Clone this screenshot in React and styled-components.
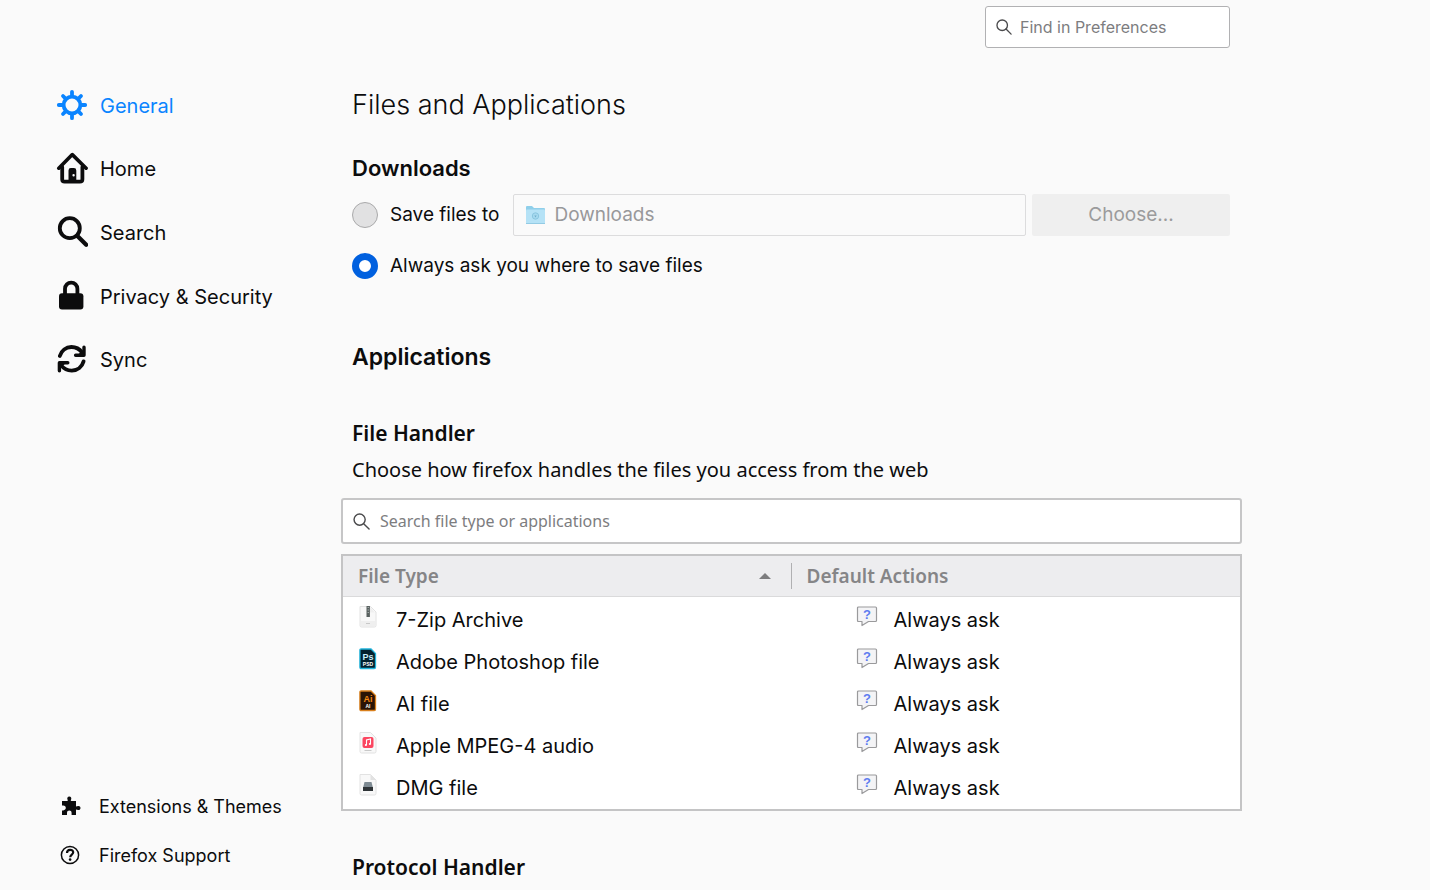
import React from "react";
import styled, { createGlobalStyle } from "styled-components";

const humanist = `"Noto Sans", "Open Sans", sans-serif`;

const GlobalStyle = createGlobalStyle`
  *, *::before, *::after { box-sizing: border-box; }
  body {
    margin: 0;
    background: #fafafa;
    color: #0c0c0d;
    font-family: Inter, "Liberation Sans", sans-serif;
    font-size: 20px;
    line-height: 24px;
  }
  h1, h2, h3, p, ul { margin: 0; padding: 0; }
  input, button { font: inherit; color: inherit; }
`;

const Page = styled.div`
  display: flex;
  min-height: 100vh;
`;

const Sidebar = styled.aside`
  display: flex;
  flex-direction: column;
  justify-content: space-between;
  flex: 0 0 341px;
  padding: 74px 12px 10px 56px;
`;

const NavList = styled.ul`
  display: flex;
  flex-direction: column;
  height: ${(p) => (p.$small ? "98px" : "318px")};
  list-style: none;
`;

const NavEntry = styled.li`
  flex: 1;
`;

const NavLink = styled.a`
  display: flex;
  align-items: center;
  gap: ${(p) => (p.$small ? "16px" : "12px")};
  height: 100%;
  padding-left: ${(p) => (p.$small ? "3px" : "0")};
  font-size: ${(p) => (p.$small ? "18px" : "20px")};
  color: ${(p) => (p.$active ? "#0a84ff" : "#0c0c0d")};
  text-decoration: none;
  svg { flex: none; margin-bottom: 2px; }
`;

const Main = styled.main`
  flex: 1;
  min-width: 0;
  max-width: 901px;
  padding-top: 6px;
`;

const TopBar = styled.div`
  display: flex;
  justify-content: flex-end;
  padding: 0 12px;
`;

const SearchField = styled.label`
  display: flex;
  align-items: center;
  gap: ${(p) => (p.$large ? "10px" : "8px")};
  width: ${(p) => p.$width || "auto"};
  height: ${(p) => (p.$large ? "46px" : "42px")};
  padding: 0 10px;
  background: #fff;
  border: ${(p) => (p.$large ? "2px solid #c6c6c7" : "1px solid #b1b1b3")};
  border-radius: 3px;
  font-family: ${(p) => (p.$large ? humanist : "inherit")};
  font-size: 16px;
  svg { flex: none; }
`;

const BareInput = styled.input`
  flex: 1;
  min-width: 0;
  padding: 0;
  border: 0;
  outline: 0;
  background: transparent;
  &::placeholder { color: #7d7d7f; opacity: 1; }
  &:disabled { color: #98989a; }
`;

const Section = styled.section`
  padding: 0 12px 0 11px;
`;

const PageTitle = styled.h1`
  margin-top: 40px;
  font-size: 27px;
  line-height: 34px;
  font-weight: 300;
`;

const Heading = styled.h2`
  margin-top: ${(p) => p.$top};
  font-size: ${(p) => (p.$large ? "23px" : "22px")};
  line-height: 28px;
  font-weight: 600;
`;

const SubHeading = styled.h3`
  margin-top: ${(p) => p.$top};
  font-family: ${humanist};
  font-size: 21px;
  line-height: 28px;
  font-weight: 600;
`;

const Description = styled.p`
  margin-top: 8px;
  font-family: ${humanist};
  font-size: 20px;
  line-height: 30px;
`;

const OptionRow = styled.div`
  display: flex;
  align-items: center;
  gap: 6px;
  height: 42px;
  margin-top: ${(p) => p.$top};
`;

const RadioLabel = styled.label`
  display: flex;
  align-items: center;
  gap: 12px;
  margin-right: 8px;
  font-size: 19px;
  white-space: nowrap;
`;

const Radio = styled.input.attrs({ type: "radio" })`
  appearance: none;
  width: 26px;
  height: 26px;
  margin: 0;
  border: 1px solid #a9a9aa;
  border-radius: 50%;
  background: #e1e1e2;
  &:checked {
    border: 7px solid #0060df;
    background: #fff;
  }
`;

const FolderField = styled.label`
  display: flex;
  align-items: center;
  gap: 8px;
  flex: 1;
  height: 42px;
  padding: 0 11px;
  border: 1px solid #dcdcdd;
  border-radius: 2px;
  font-size: 19px;
  svg { flex: none; }
`;

const ChooseButton = styled.button`
  width: 198px;
  height: 42px;
  border: 0;
  border-radius: 2px;
  background: #efefef;
  font-size: 19px;
  &:disabled { color: #9b9b9c; }
`;

const Handler = styled.div`
  margin-top: 13px;
`;

const Table = styled.table`
  width: 100%;
  margin-top: 10px;
  table-layout: fixed;
  border-collapse: separate;
  border-spacing: 0;
  border: 2px solid #c4c4c5;
  background: #fff;
  tbody::before {
    content: "";
    display: block;
    height: 2px;
  }
`;

const HeadCell = styled.th`
  height: 41px;
  padding: 0;
  background: #ededef;
  border-bottom: 1px solid #dadadb;
  font-family: ${humanist};
  font-size: 19px;
  font-weight: 600;
  color: #858587;
  text-align: left;
`;

const SortButton = styled.button`
  display: flex;
  align-items: center;
  justify-content: space-between;
  width: 100%;
  height: 26px;
  padding: 0 20px 0 15px;
  border: 0;
  border-right: ${(p) => (p.$divided ? "1px solid #b0b0b2" : "0")};
  background: transparent;
`;

const Cell = styled.td`
  height: 42px;
  padding: 0 0 0 ${(p) => p.$indent};
`;

const CellContent = styled.div`
  display: flex;
  align-items: center;
  gap: ${(p) => p.$gap};
  svg { flex: none; margin-bottom: 6px; }
`;

const GearIcon = () => (
  <svg width="32" height="32" viewBox="0 0 32 32" fill="none" stroke="currentColor" strokeLinecap="round">
    <circle cx="16" cy="16" r="8.4" strokeWidth="3.8" />
    <path strokeWidth="3.8" d="M16 7V2.800M16 25v4.200M7 16H2.800M25 16h4.200M9.600 9.600 7 7M22.400 9.600 25 7M9.600 22.400 7 25M22.400 22.400 25 25" />
  </svg>
);

const HomeIcon = () => (
  <svg width="32" height="32" viewBox="0 0 32 32" fill="none" stroke="currentColor" strokeLinecap="round" strokeLinejoin="round">
    <path strokeWidth="3.6" d="M2.800 16.200 16.300 2.600l13.800 13.600" />
    <path strokeWidth="3.8" d="M6.200 15v12.200q0 2.500 2.500 2.500h15.200q2.500 0 2.500-2.500V15" />
    <path fill="currentColor" stroke="none" fillRule="evenodd" d="M12.500 30V18.400q0-2.400 2.400-2.400h3q2.400 0 2.400 2.400V30zM17.600 22a1.200 1.200 0 1 0 0 2.400 1.200 1.200 0 0 0 0-2.400z" />
  </svg>
);

const SearchIcon = () => (
  <svg width="32" height="32" viewBox="0 0 32 32" fill="none" stroke="currentColor" strokeLinecap="round">
    <circle cx="13.8" cy="12.2" r="10" strokeWidth="3.8" />
    <path strokeWidth="4.2" d="m21.200 19.800 9 9" />
  </svg>
);

const LockIcon = () => (
  <svg width="32" height="32" viewBox="0 0 32 32" fill="none">
    <rect x="3" y="13.2" width="24.4" height="16.4" rx="3" fill="currentColor" />
    <path stroke="currentColor" strokeWidth="3.8" d="M9 15V8.800a6.200 6.200 0 0 1 12.400 0V15" />
  </svg>
);

const SyncIcon = () => (
  <svg width="32" height="32" viewBox="0 0 32 32" fill="none" stroke="currentColor" strokeWidth="3.8" strokeLinecap="round">
    <path d="M3.800 13C5.400 7.600 10 4 15.400 4c4.400 0 8.200 2 10.800 5.600M27.600 18.400c-1.600 5.400-6 9.200-11.800 9.200-4.400 0-8.400-2.200-10.800-5.600" />
    <path strokeWidth="3.4" strokeLinejoin="round" d="M28 4.200v8h-8.400M3.400 27.800v-8h8.400" />
    <path fill="currentColor" stroke="none" d="m28.500 6-7 6h7zM3 26l7-6H3z" />
  </svg>
);

const PuzzleIcon = () => (
  <svg width="24" height="24" viewBox="0 0 24 24" fill="currentColor">
    <path d="M3 7h5.200c.7 0 .8-.5.4-1.200-.9-1.700.1-3.400 1.700-3.400s2.600 1.700 1.700 3.400c-.4.700-.3 1.200.4 1.200H17v4.800c0 .7.500.9 1.200.5 1.700-.9 3.300.1 3.300 1.700s-1.600 2.600-3.300 1.700c-.7-.4-1.200-.2-1.200.5v4.800h-4.400v-2c0-3.200-4.600-3.200-4.600 0v2H3v-4.600h1.200c3.500 0 3.500-4.800 0-4.800H3z" />
  </svg>
);

const HelpIcon = () => (
  <svg width="24" height="24" viewBox="0 0 24 24" fill="none" stroke="currentColor">
    <circle cx="11" cy="12" r="8.600" strokeWidth="1.500" />
    <path strokeWidth="2.200" d="M8 10c0-4.200 6.200-4 6.200-.7 0 2.300-3 2.300-3 5" />
    <circle cx="11.100" cy="16.600" r="1.300" fill="currentColor" stroke="none" />
  </svg>
);

const LensIcon = ({ size }) => (
  <svg width={size} height={size} viewBox="0 0 18 18" fill="none" stroke="#4a4a4c" strokeWidth="1.500" strokeLinecap="round">
    <circle cx="7" cy="7" r="5.900" />
    <path d="m11.300 11.300 5.700 5.700" />
  </svg>
);

const FolderIcon = () => (
  <svg width="21" height="20" viewBox="0 0 21 20">
    <path fill="#8fcfea" d="M1 2q0-1 1-1h5l2 2h10q1 0 1 1v4H1z" />
    <rect x="1" y="4.500" width="19" height="14" rx="1" fill="#b5e2f6" />
    <path stroke="#93cbe4" d="M1 18.500h19" />
    <circle cx="10.500" cy="11" r="3.200" fill="#a6d9ef" stroke="#8ac6e0" />
    <path fill="#6faecb" d="M9.300 10.500h2.400L10.500 12.400z" />
  </svg>
);

const SortIcon = () => (
  <svg width="12" height="8" viewBox="0 0 12 8">
    <path fill="#7d7d7f" d="M0 7 6 1l6 6z" />
  </svg>
);

const Sheet = ({ children }) => (
  <svg width="20" height="22" viewBox="0 0 20 22">
    <path fill="#f8f8f8" stroke="#e2e2e2" d="M2 .5h10.500L18 6v13.500q0 1.500-1.500 1.500h-13Q2 21 2 19.500z" />
    {children}
  </svg>
);

const ZipIcon = () => (
  <Sheet>
    <path fill="#efefef" d="M12 1v5.500h5.500V20H3v-5h14V7z" />
    <rect x="8.500" y="0" width="3.400" height="11" fill="#58605f" />
    <path stroke="#c2c8c7" strokeDasharray="1 1.500" d="M10.200 1v7" />
    <path stroke="#c8c8c8" d="M8 17.500h4" />
  </Sheet>
);

const AdobeIcon = ({ edge, fill, ink, name, kind }) => (
  <svg width="20" height="22" viewBox="0 0 20 22" fontFamily="Liberation Sans, sans-serif" fontWeight="700" textAnchor="middle">
    <path fill={fill} stroke={edge} strokeWidth="1.300" d="M3.200 1h9.800L17.500 5.500v13.700q0 1.300-1.300 1.300h-13q-1.300 0-1.300-1.300V2.300Q1.900 1 3.200 1z" />
    <text x="10" y="12" fontSize="9" fill={ink}>{name}</text>
    <text x="10" y="18" fontSize="5" fill="#fff">{kind}</text>
  </svg>
);

const AudioIcon = () => (
  <Sheet>
    <rect x="4.500" y="5" width="11" height="11" rx="2" fill="#fb4660" />
    <path fill="none" stroke="#fff" strokeWidth="1.100" d="M8.500 13V8l4-1v5" />
    <circle cx="7.900" cy="13" r="1.100" fill="#fff" />
    <circle cx="11.900" cy="12" r="1.100" fill="#fff" />
    <path stroke="#c8c8c8" d="M6.500 18.500h7" />
  </Sheet>
);

const DiskIcon = () => (
  <Sheet>
    <path fill="#e2e2e2" d="M12.500.5V6H18z" />
    <path fill="#7e8a92" d="M6.500 8h7l1.500 6H5z" />
    <path fill="#2f3437" d="M5 13h10v4H5z" />
  </Sheet>
);

const AskIcon = () => (
  <svg width="22" height="22" viewBox="0 0 22 22">
    <path fill="#f4f4f6" stroke="#9a9a9c" strokeWidth="1.200" strokeLinejoin="round" d="M2.500 1h17q1 0 1 1v12.500q0 1-1 1h-7L6 19.500v-4H2.500q-1 0-1-1V2q0-1 1-1z" />
    <text x="11" y="12.500" textAnchor="middle" fontFamily="Liberation Sans, sans-serif" fontSize="13" fontWeight="700" fill="#5f7df0">?</text>
  </svg>
);

const navItems = [
  { label: "General", icon: <GearIcon />, active: true },
  { label: "Home", icon: <HomeIcon /> },
  { label: "Search", icon: <SearchIcon /> },
  { label: "Privacy & Security", icon: <LockIcon /> },
  { label: "Sync", icon: <SyncIcon /> },
];

const footerItems = [
  { label: "Extensions & Themes", icon: <PuzzleIcon /> },
  { label: "Firefox Support", icon: <HelpIcon /> },
];

const fileTypes = [
  { label: "7-Zip Archive", icon: <ZipIcon /> },
  { label: "Adobe Photoshop file", icon: <AdobeIcon edge="#21b4dc" fill="#03202e" ink="#c8eefb" name="Ps" kind="PSD" /> },
  { label: "AI file", icon: <AdobeIcon edge="#d9801c" fill="#2a1405" ink="#f58a12" name="Ai" kind="AI" /> },
  { label: "Apple MPEG-4 audio", icon: <AudioIcon /> },
  { label: "DMG file", icon: <DiskIcon /> },
];

export default function App() {
  return (
    <>
      <GlobalStyle />
      <Page>
        <Sidebar>
          <nav aria-label="Categories">
            <NavList>
              {navItems.map((item) => (
                <NavEntry key={item.label}>
                  <NavLink href="#" $active={item.active}>
                    {item.icon}
                    {item.label}
                  </NavLink>
                </NavEntry>
              ))}
            </NavList>
          </nav>
          <NavList $small>
            {footerItems.map((item) => (
              <NavEntry key={item.label}>
                <NavLink href="#" $small>
                  {item.icon}
                  {item.label}
                </NavLink>
              </NavEntry>
            ))}
          </NavList>
        </Sidebar>
        <Main>
          <TopBar>
            <SearchField $width="245px">
              <LensIcon size={16} />
              <BareInput type="search" placeholder="Find in Preferences" />
            </SearchField>
          </TopBar>
          <Section>
            <PageTitle>Files and Applications</PageTitle>
            <Heading $top="32px">Downloads</Heading>
            <OptionRow $top="12px">
              <RadioLabel>
                <Radio name="save" />
                Save files to
              </RadioLabel>
              <FolderField>
                <FolderIcon />
                <BareInput type="text" value="Downloads" disabled readOnly />
              </FolderField>
              <ChooseButton type="button" disabled>Choose...</ChooseButton>
            </OptionRow>
            <OptionRow $top="9px">
              <RadioLabel>
                <Radio name="save" defaultChecked />
                Always ask you where to save files
              </RadioLabel>
            </OptionRow>
            <Heading $top="56px" $large>Applications</Heading>
            <SubHeading $top="48px">File Handler</SubHeading>
            <Description>Choose how firefox handles the files you access from the web</Description>
          </Section>
          <Handler>
            <SearchField $large>
              <LensIcon size={17} />
              <BareInput type="search" placeholder="Search file type or applications" />
            </SearchField>
            <Table>
              <thead>
                <tr>
                  <HeadCell scope="col">
                    <SortButton type="button" $divided>
                      File Type
                      <SortIcon />
                    </SortButton>
                  </HeadCell>
                  <HeadCell scope="col">
                    <SortButton type="button">Default Actions</SortButton>
                  </HeadCell>
                </tr>
              </thead>
              <tbody>
                {fileTypes.map((type) => (
                  <tr key={type.label}>
                    <Cell $indent="15px">
                      <CellContent $gap="18px">
                        {type.icon}
                        {type.label}
                      </CellContent>
                    </Cell>
                    <Cell $indent="64px">
                      <CellContent $gap="16px">
                        <AskIcon />
                        Always ask
                      </CellContent>
                    </Cell>
                  </tr>
                ))}
              </tbody>
            </Table>
          </Handler>
          <Section>
            <SubHeading $top="42px">Protocol Handler</SubHeading>
          </Section>
        </Main>
      </Page>
    </>
  );
}
